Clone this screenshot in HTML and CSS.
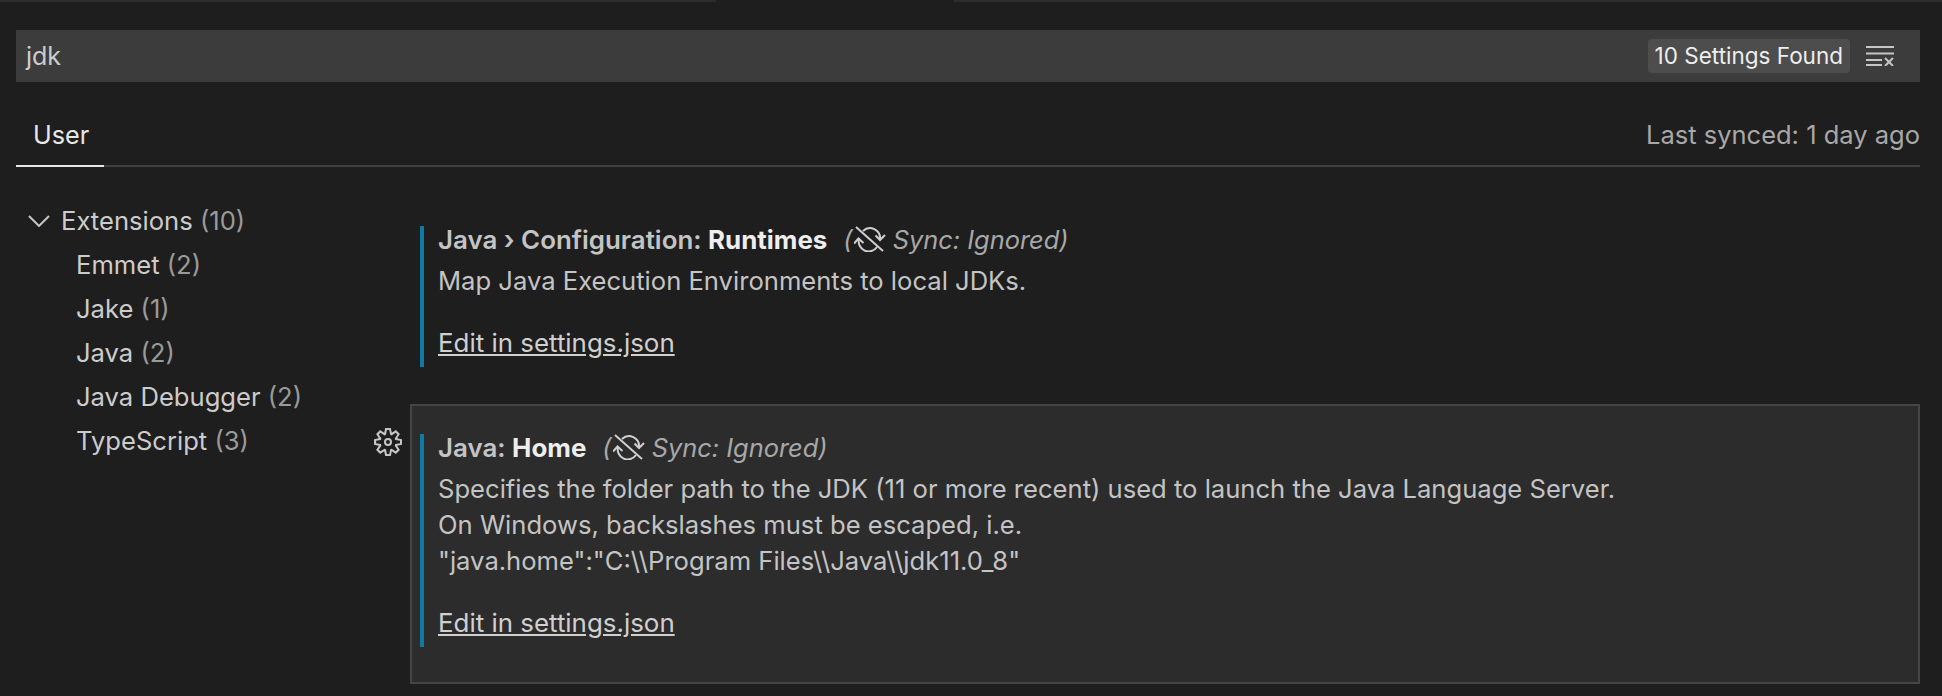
FILE: index.html
```html
<!DOCTYPE html>
<html lang="en">
<head>
    <meta charset="UTF-8">
    <title>Settings</title>
    <link rel="stylesheet" href="styles.css">
</head>
<body>
    <!-- Top edge of the editor -->
    <div class="top-strip">
        <div class="strip-part strip-left"></div>
        <div class="strip-part strip-right"></div>
    </div>

    <!-- Search -->
    <div class="search-box">
        <span class="search-text">jdk</span>
        <span class="search-count">10 Settings Found</span>
        <svg class="clear-icon" width="28" height="20" viewBox="0 0 28 20" fill="#c5c5c5">
            <rect x="0" y="0" width="28" height="2"/>
            <rect x="0" y="6.500" width="28" height="2"/>
            <rect x="0" y="13" width="16" height="2"/>
            <rect x="0" y="18" width="16" height="2"/>
            <path d="M19 12l8 8M27 12l-8 8" stroke="#c5c5c5" stroke-width="2" fill="none"/>
        </svg>
    </div>

    <!-- Tabs -->
    <div class="tabs">
        <div class="tab-active">User</div>
        <div class="last-synced">Last synced: 1 day ago</div>
    </div>

    <div class="content">
        <!-- Tree -->
        <nav class="tree">
            <div class="tree-row tree-root">
                <svg class="chevron" width="22" height="12" viewBox="0 0 22 12" fill="none" stroke="#c5c5c5" stroke-width="2"><path d="M1 1l10 10L21 1"/></svg>
                <span>Extensions <span class="count">(10)</span></span>
            </div>
            <div class="tree-row tree-child">Emmet <span class="count">(2)</span></div>
            <div class="tree-row tree-child">Jake <span class="count">(1)</span></div>
            <div class="tree-row tree-child">Java <span class="count">(2)</span></div>
            <div class="tree-row tree-child">Java Debugger <span class="count">(2)</span></div>
            <div class="tree-row tree-child">TypeScript <span class="count">(3)</span></div>
        </nav>

        <!-- Settings list -->
        <main class="settings">
            <section class="setting">
                <div class="setting-inner">
                    <div class="setting-title">
                        <span class="title-cat">Java › Configuration: </span><span class="title-name">Runtimes</span>
                        <span class="sync-note">(<svg class="sync-icon" width="32" height="26" viewBox="0 0 32 26" fill="none" stroke="#d0d0d0" stroke-width="2"><path d="M9 5A10 10 0 0 1 26 13M23 21A10 10 0 0 1 5 13"/><path d="M21.500 9.500l4.500 4.500 5-5M0 17.500l4.500-5 5 4.500"/><path d="M2 1l27 24"/></svg> Sync: Ignored)</span>
                    </div>
                    <p class="setting-desc">Map Java Execution Environments to local JDKs.</p>
                    <a class="setting-link">Edit in settings.json</a>
                </div>
            </section>

            <section class="setting setting-focused">
                <svg class="gear" width="28" height="28" viewBox="0 0 24 24" fill="#c5c5c5"><path fill-rule="evenodd" d="M19.850 8.750l4.150.830v4.840l-4.150.830 2.350 3.520-3.430 3.430-3.520-2.350-.830 4.150H9.580l-.830-4.150-3.520 2.350-3.430-3.430 2.350-3.520L0 14.420V9.580l4.150-.830L1.800 5.230 5.230 1.800l3.520 2.350L9.580 0h4.840l.830 4.150 3.520-2.350 3.430 3.430-2.350 3.520zm-1.570 5.070l4-.810v-2l-4-.810-.540-1.300 2.290-3.430-1.430-1.430-3.430 2.290-1.300-.540-.810-4h-2l-.810 4-1.300.540-3.430-2.290-1.430 1.430L6.380 8.900l-.540 1.300-4 .810v2l4 .810.540 1.300-2.290 3.430 1.430 1.430 3.430-2.290 1.300.540.810 4h2l.810-4 1.300-.540 3.430 2.290 1.430-1.430-2.290-3.430.540-1.300zM12 8.570A3.430 3.430 0 1 1 12 15.430 3.430 3.430 0 0 1 12 8.570zm0 1.720a1.710 1.710 0 1 0 0 3.420 1.710 1.710 0 0 0 0-3.420z"/></svg>
                <div class="setting-inner">
                    <div class="setting-title">
                        <span class="title-cat">Java: </span><span class="title-name">Home</span>
                        <span class="sync-note">(<svg class="sync-icon" width="32" height="26" viewBox="0 0 32 26" fill="none" stroke="#d0d0d0" stroke-width="2"><path d="M9 5A10 10 0 0 1 26 13M23 21A10 10 0 0 1 5 13"/><path d="M21.500 9.500l4.500 4.500 5-5M0 17.500l4.500-5 5 4.500"/><path d="M2 1l27 24"/></svg> Sync: Ignored)</span>
                    </div>
                    <p class="setting-desc">Specifies the folder path to the JDK (11 or more recent) used to launch the Java Language Server.<br>On Windows, backslashes must be escaped, i.e.<br>"java.home":"C:\\Program Files\\Java\\jdk11.0_8"</p>
                    <a class="setting-link">Edit in settings.json</a>
                </div>
            </section>
        </main>
    </div>
</body>
</html>
```

FILE: styles.css
```css
* {
    margin: 0;
    padding: 0;
    box-sizing: border-box;
    font-family: 'Inter', sans-serif;
}

body {
    background: #1e1e1e;
    color: #cccccc;
    font-size: 25.600px;
    height: 696px;
    overflow: hidden;
    padding: 0 22px 0 16px;
}

/* Top strip */
.top-strip {
    display: flex;
    justify-content: space-between;
    height: 2px;
    margin: 0 -22px 0 -16px;
}

.strip-part {
    background: #2d2d2d;
}

.strip-left {
    width: 716px;
}

.strip-right {
    width: 988px;
}

/* Search */
.search-box {
    display: flex;
    align-items: center;
    height: 52px;
    margin-top: 28px;
    padding: 0 26px 0 10px;
    background: #3c3c3c;
}

.search-text {
    flex: 1;
    font-size: 25px;
    color: #cccccc;
}

.search-count {
    height: 34px;
    line-height: 33px;
    padding: 0 7px;
    margin-right: 16px;
    font-size: 22.500px;
    color: #eeeeee;
    background: #4d4d4d;
    border-radius: 4px;
}

/* Tabs */
.tabs {
    display: flex;
    justify-content: space-between;
    align-items: center;
    height: 85px;
    padding-top: 22px;
    border-bottom: 2px solid #404040;
}

.tab-active {
    align-self: flex-end;
    width: 88px;
    height: 85px;
    margin-bottom: -2px;
    padding: 30px 0 0 17px;
    line-height: 46px;
    font-size: 25.200px;
    color: #e7e7e7;
    border-bottom: 2px solid #e7e7e7;
}

.last-synced {
    font-size: 25.500px;
    color: #a8a8a8;
}

/* Tree */
.content {
    display: flex;
}

.tree {
    width: 394px;
    padding-top: 32px;
}

.tree-row {
    height: 44px;
    line-height: 44px;
    white-space: pre;
}

.tree-root {
    display: flex;
    align-items: center;
    gap: 11px;
    padding-left: 12px;
}

.tree-child {
    padding-left: 60px;
}

.count {
    color: #9a9a9a;
}

/* Settings */
.settings {
    flex: 1;
    padding-top: 57px;
}

.setting {
    position: relative;
    padding: 0 8px;
    border: 2px solid transparent;
}

.setting-focused {
    height: 280px;
    margin-top: 35px;
    padding-top: 28px;
    background: #2c2c2c;
    border-color: #454545;
}

.setting-inner {
    padding: 0 0 6px 14px;
    border-left: 4px solid #0e7ba3;
}

.setting-title {
    display: flex;
    align-items: center;
    height: 26px;
    white-space: pre;
    font-size: 25.900px;
}

.title-cat {
    font-weight: 600;
    color: #c4c4c4;
}

.title-name {
    font-weight: 700;
    color: #eeeeee;
}

.sync-note {
    display: flex;
    align-items: center;
    margin-left: 16px;
    font-size: 25.400px;
    font-style: italic;
    color: #a8a8a8;
}

.sync-icon {
    margin: 0 0 0 1px;
}

.setting-desc {
    margin-top: 11px;
    line-height: 36px;
    color: #c4c4c4;
}

.setting-link {
    display: inline-block;
    margin-top: 26px;
    line-height: 36px;
    font-size: 25.900px;
    color: #d0d0d0;
    text-decoration: underline;
}

/* Gear floats left of the focused setting */
.gear {
    position: absolute;
    left: -38px;
    top: 22px;
}
```
